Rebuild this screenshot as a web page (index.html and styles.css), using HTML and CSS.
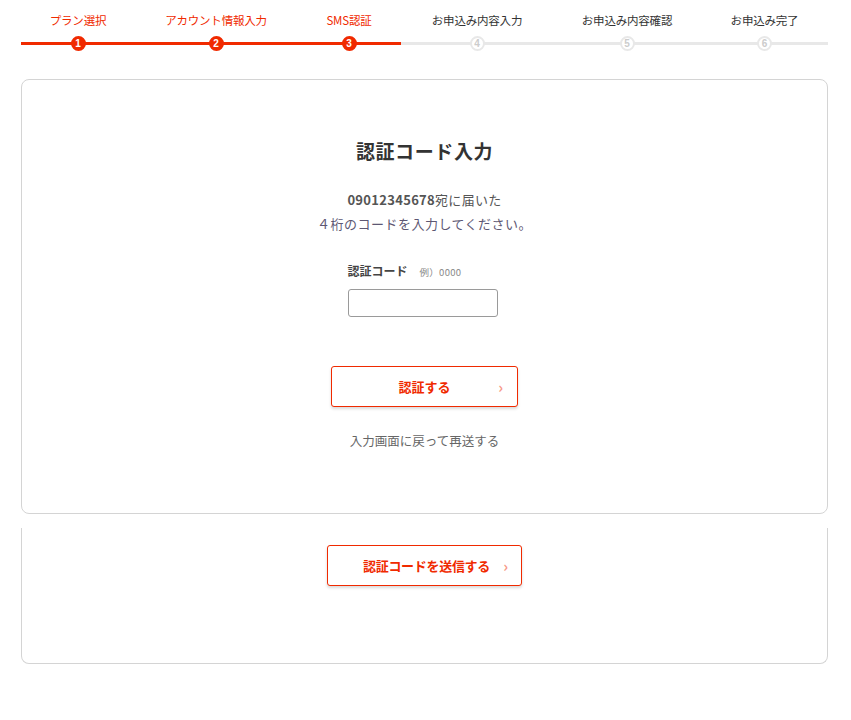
FILE: index.html
```html
<!DOCTYPE html>
<html lang="ja">
<head>
<meta charset="utf-8">
<title>認証コード入力</title>
<link rel="stylesheet" href="styles.css">
</head>
<body>
<div class="page">
  <ol class="steps">
    <li class="step done w1"><span class="label">プラン選択</span><span class="num">1</span></li>
    <li class="step done w2"><span class="label">アカウント情報入力</span><span class="num">2</span></li>
    <li class="step done w3"><span class="label">SMS認証</span><span class="num">3</span></li>
    <li class="step w4"><span class="label">お申込み内容入力</span><span class="num">4</span></li>
    <li class="step w5"><span class="label">お申込み内容確認</span><span class="num">5</span></li>
    <li class="step w6"><span class="label">お申込み完了</span><span class="num">6</span></li>
  </ol>

  <section class="card">
    <h1 class="title">認証コード入力</h1>
    <p class="desc"><b>09012345678</b>宛に届いた<br><span class="accent">４桁のコードを入力してください。</span></p>
    <div class="field">
      <label class="field-label" for="code">認証コード<span class="hint">例）0000</span></label>
      <input class="field-input" id="code" type="text">
    </div>
    <button class="btn btn-auth" type="button"><span>認証する</span><i class="chev">›</i></button>
    <a class="resend">入力画面に戻って再送する</a>
  </section>

  <section class="card card-sub">
    <button class="btn btn-send" type="button"><span>認証コードを送信する</span><i class="chev">›</i></button>
  </section>
</div>
</body>
</html>
```
FILE: styles.css
```css
* { box-sizing: border-box; }
html, body { margin: 0; padding: 0; background: #fff; }
body {
  font-family: "Noto Sans CJK JP", "Noto Sans", sans-serif;
  color: #333;
}
.page { padding: 0 23px 0 21px; }

.steps {
  list-style: none;
  margin: 0;
  padding: 10px 0 0;
  display: flex;
}
.step {
  display: flex;
  flex-direction: column;
  align-items: center;
  position: relative;
}
.w1 { width: 114px; }
.w2 { width: 162px; }
.w3 { width: 104px; }
.w4 { width: 152px; }
.w5 { width: 148px; }
.w6 { width: 127px; }
.step::after {
  content: "";
  position: absolute;
  left: 0;
  right: 0;
  top: 32px;
  height: 3px;
  background: #e8e8e8;
}
.step.done::after { background: #f02a00; }
.label {
  font-size: 11.5px;
  line-height: 20px;
  height: 20px;
  color: #333;
  white-space: nowrap;
  letter-spacing: -0.2px;
}
.step.done .label { color: #f02a00; }
.num {
  position: relative;
  z-index: 1;
  margin-top: 6px;
  width: 15px;
  height: 15px;
  border-radius: 50%;
  background: #fff;
  border: 2px solid #e8e8e8;
  color: #ccc;
  font-family: "Liberation Sans", Arial, sans-serif;
  font-size: 10px;
  font-weight: bold;
  line-height: 11px;
  text-align: center;
}
.step.done .num {
  background: #f02a00;
  border-color: #f02a00;
  color: #fff;
}

.card {
  margin-top: 28px;
  border: 1px solid #d4d4d4;
  border-radius: 8px;
  height: 435px;
  display: flex;
  flex-direction: column;
  align-items: center;
  padding-top: 58px;
}
.title {
  margin: 0;
  font-size: 19px;
  font-weight: bold;
  line-height: 26px;
  color: #333;
  letter-spacing: 0.6px;
}
.desc {
  margin: 24px 0 0;
  font-size: 13px;
  line-height: 24px;
  color: #555;
  text-align: center;
  letter-spacing: 0.3px;
}
.desc b { color: #555; }
.accent { color: #5d5773; letter-spacing: 0.5px; }

.field {
  margin-top: 25px;
  margin-right: 4px;
  width: 150px;
  display: flex;
  flex-direction: column;
}
.field-label {
  font-size: 12px;
  font-weight: bold;
  line-height: 20px;
  color: #444;
}
.hint {
  margin-left: 12px;
  font-size: 9.5px;
  font-weight: normal;
  color: #888;
  letter-spacing: 0.3px;
}
.field-input {
  margin-top: 7px;
  width: 150px;
  height: 28px;
  border: 1px solid #9a9a9a;
  border-radius: 3px;
  background: #fff;
  padding: 0 8px;
  font: inherit;
}

.btn {
  display: flex;
  align-items: center;
  justify-content: center;
  position: relative;
  height: 41px;
  background: #fff;
  border: 1px solid #f02a00;
  border-radius: 3px;
  box-shadow: 0 2px 3px rgba(0,0,0,0.15);
  color: #f02a00;
  font-family: "Noto Sans CJK JP", "Noto Sans", sans-serif;
  font-size: 13px;
  font-weight: bold;
  padding: 0;
}
.chev {
  position: absolute;
  top: 50%;
  transform: translateY(-52%);
  font-style: normal;
  font-weight: bold;
  font-size: 15px;
  color: #f79a8a;
}
.btn-auth { margin-top: 49px; width: 187px; }
.btn-auth .chev { right: 14px; }
.btn-send { width: 195px; padding-left: 4px; }
.btn-send .chev { right: 13px; }
.btn-send span { letter-spacing: -0.3px; }

.resend {
  margin-top: 24px;
  font-size: 12.5px;
  line-height: 20px;
  color: #666;
}

.card-sub {
  margin-top: 14px;
  border-top: none;
  border-top-left-radius: 0;
  border-top-right-radius: 0;
  height: 136px;
  padding-top: 17px;
}
```
